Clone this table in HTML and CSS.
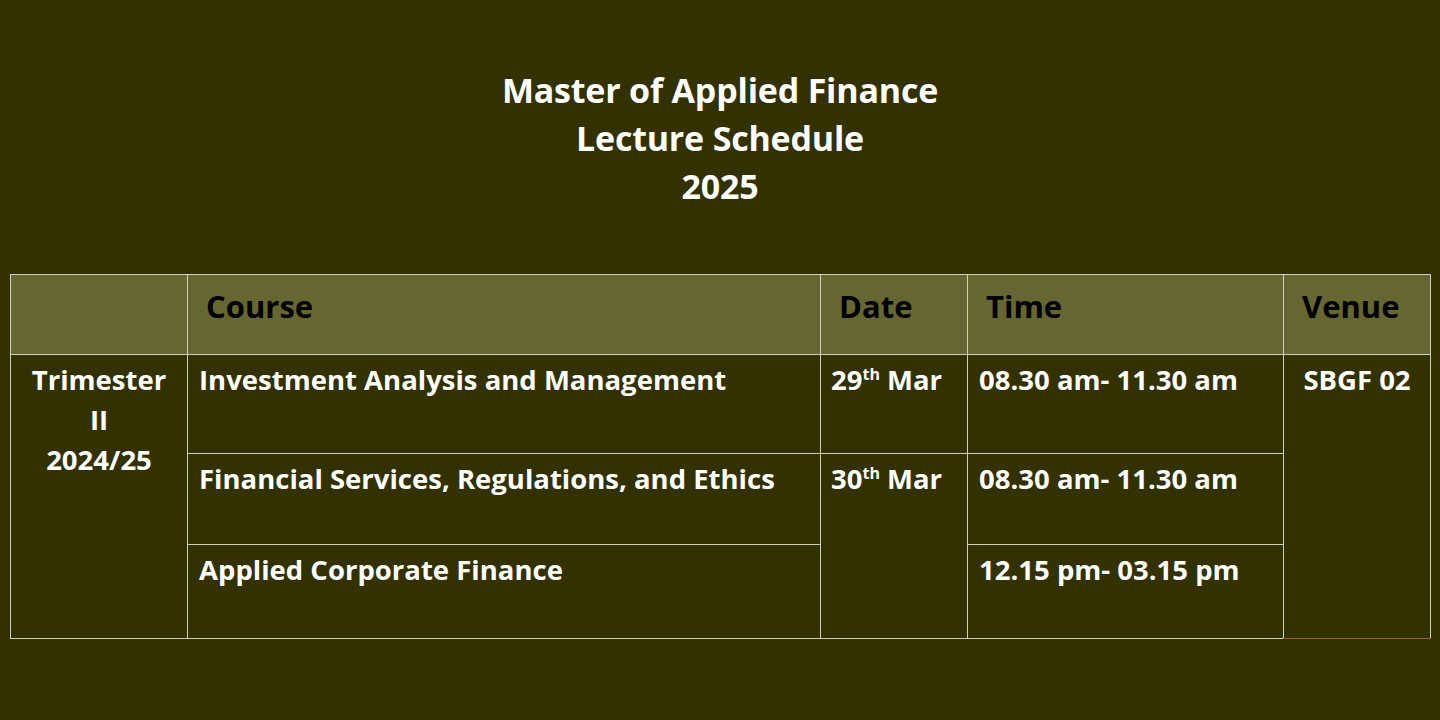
FILE: index.html
```html
<!DOCTYPE html>
<html lang="en">
<head>
<meta charset="utf-8">
<title>Master of Applied Finance Lecture Schedule 2025</title>
<link rel="stylesheet" href="styles.css">
</head>
<body>
<main class="slide">
  <h1 class="title">Master of Applied Finance<br>Lecture Schedule<br>2025</h1>
  <table class="schedule">
    <colgroup>
      <col class="c-term"><col class="c-course"><col class="c-date"><col class="c-time"><col class="c-venue">
    </colgroup>
    <thead>
      <tr>
        <th></th>
        <th>Course</th>
        <th>Date</th>
        <th>Time</th>
        <th>Venue</th>
      </tr>
    </thead>
    <tbody>
      <tr class="r1">
        <td rowspan="3" class="term">Trimester<br>II<br>2024/25</td>
        <td>Investment Analysis and Management</td>
        <td class="date">29<sup>th</sup> Mar</td>
        <td>08.30 am- 11.30 am</td>
        <td rowspan="3" class="venue">SBGF 02</td>
      </tr>
      <tr class="r2">
        <td>Financial Services, Regulations, and Ethics</td>
        <td rowspan="2" class="date">30<sup>th</sup> Mar</td>
        <td>08.30 am- 11.30 am</td>
      </tr>
      <tr class="r3">
        <td>Applied Corporate Finance</td>
        <td>12.15 pm- 03.15 pm</td>
      </tr>
    </tbody>
  </table>
</main>
</body>
</html>
```
FILE: styles.css
```css
html, body {
  margin: 0;
  padding: 0;
  background: #333100;
}
body {
  width: 1440px;
  height: 720px;
  overflow: hidden;
  font-family: "Open Sans", Lato, "DejaVu Sans", sans-serif;
  font-weight: 700;
  color: #ffffff;
}
.slide {
  padding: 66px 10px 0 10px;
}
.title {
  margin: 0;
  text-align: center;
  font-size: 34px;
  line-height: 48px;
  font-weight: 700;
  letter-spacing: -0.2px;
  color: #ffffff;
}
.schedule {
  margin-top: 64px;
  width: 1420px;
  border-collapse: collapse;
  table-layout: fixed;
}
.c-term { width: 177px; }
.c-course { width: 633px; }
.c-date { width: 147px; }
.c-time { width: 316px; }
.c-venue { width: 147px; }
.schedule th,
.schedule td {
  border: 1px solid #cfcfbf;
  vertical-align: top;
  text-align: left;
  padding: 0;
}
.schedule thead th {
  background: #666633;
  color: #000000;
  font-size: 31px;
  line-height: 40px;
  height: 80px;
  padding: 11px 0 0 18px;
  box-sizing: border-box;
  vertical-align: top;
}
.schedule tbody td {
  font-size: 27.5px;
  line-height: 40px;
  padding: 5px 0 0 11px;
  box-sizing: border-box;
}
.r1 td { height: 99px; }
.r2 td { height: 91px; }
.r3 td { height: 94px; }
.schedule td.term {
  text-align: center;
  padding-left: 0;
}
.schedule td.venue {
  text-align: center;
  padding-left: 0;
  border-bottom-color: #9a6428;
}
.schedule td.date {
  padding-left: 10px;
  white-space: nowrap;
}
sup {
  font-size: 16px;
  line-height: 0;
  vertical-align: 10px;
}
```
